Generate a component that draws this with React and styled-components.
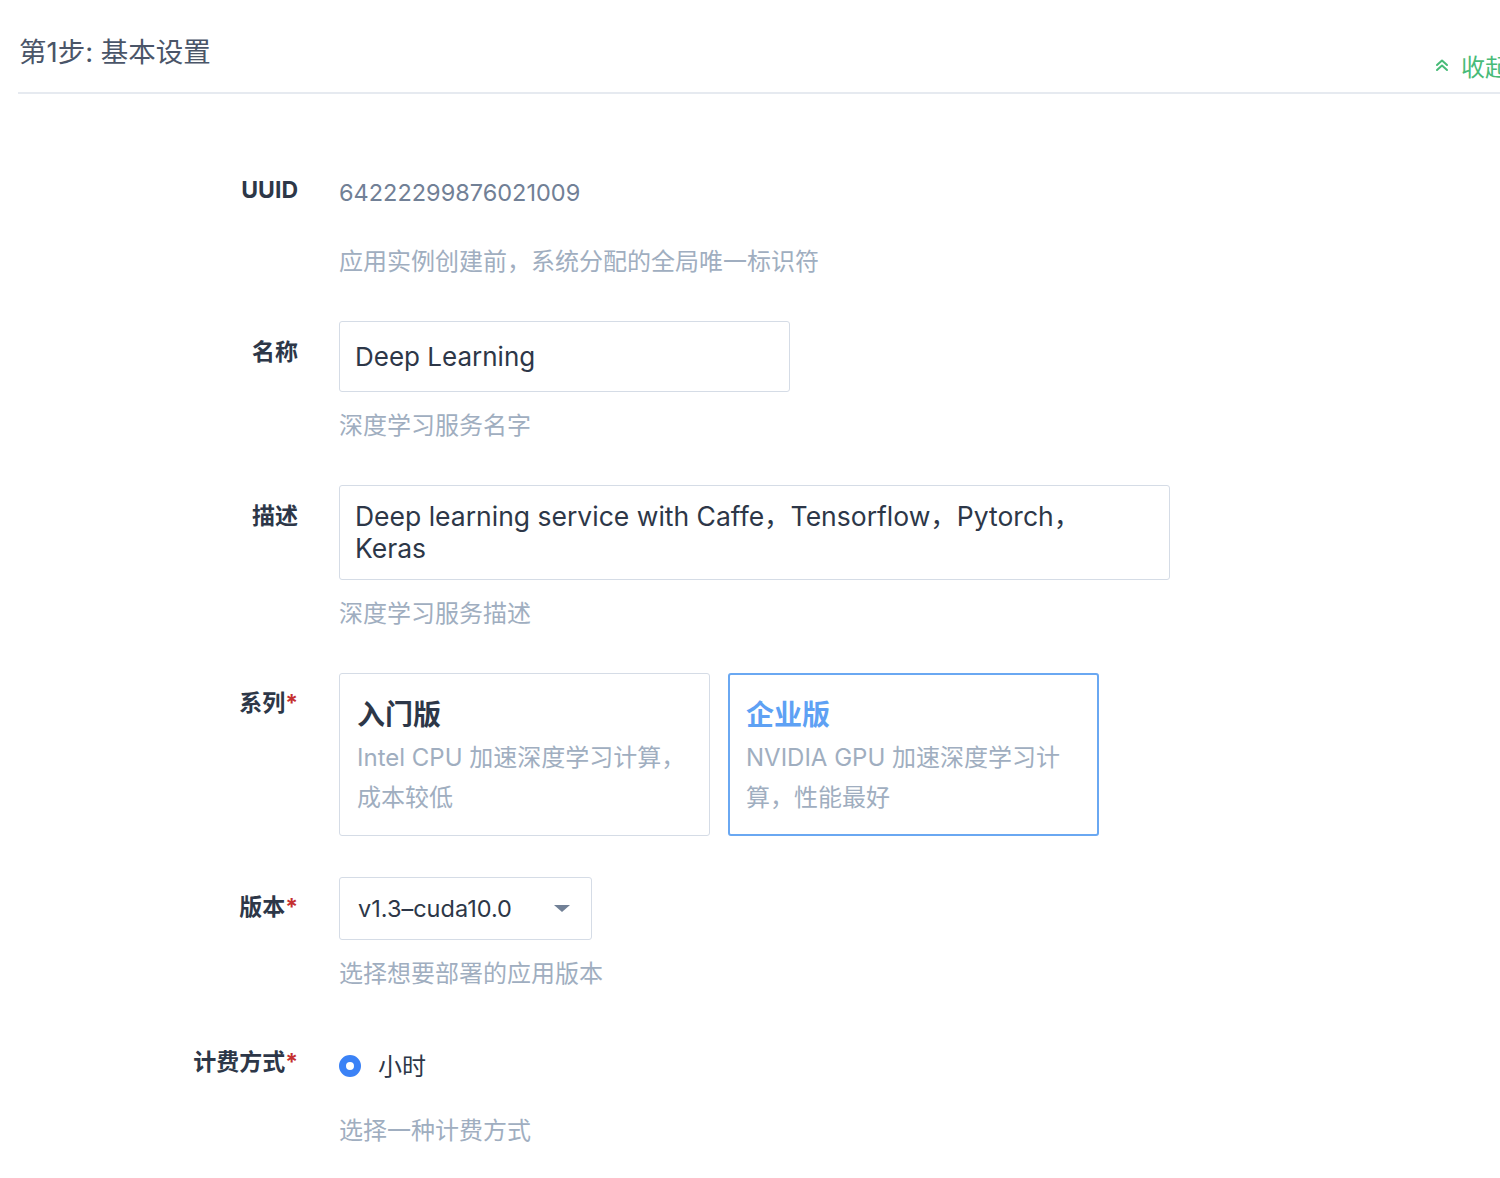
import React from 'react';
import styled, { createGlobalStyle } from 'styled-components';

const GlobalStyle = createGlobalStyle`
  html, body {
    margin: 0;
    padding: 0;
    background: #ffffff;
    overflow: hidden;
  }
  body {
    font-family: Inter, "Noto Sans CJK SC", sans-serif;
    color: #2d3748;
  }
`;

const Page = styled.div`
  width: 1500px;
  margin-left: 18px;
`;

const Header = styled.div`
  display: flex;
  justify-content: space-between;
  height: 92px;
  border-bottom: 2px solid #e6eaf0;
`;

const Title = styled.h2`
  margin: 0;
  padding-top: 34px;
  padding-left: 1px;
  font-size: 27.5px;
  font-weight: 400;
  line-height: 36px;
  color: #4a5568;
`;

const Collapse = styled.div`
  display: flex;
  align-items: center;
  gap: 12px;
  padding-top: 51px;
  margin-right: 9px;
  height: 28px;
  font-size: 24px;
  color: #48bb78;
  white-space: nowrap;
`;

const Form = styled.div`
  padding-top: 79px;
`;

const Row = styled.div`
  display: grid;
  grid-template-columns: 280px 1fr;
  column-gap: 41px;
  margin-bottom: ${p => p.gap || 45}px;
`;

const Label = styled.div`
  padding-top: ${p => p.offset}px;
  text-align: right;
  font-size: 23px;
  font-weight: 700;
  line-height: 28px;
  color: #2d3748;
`;

const Star = styled.span`
  color: #c53030;
`;

const Field = styled.div`
  display: flex;
  flex-direction: column;
  align-items: flex-start;
`;

const Value = styled.div`
  font-size: 23.5px;
  line-height: 40px;
  color: #718096;
`;

const Help = styled.div`
  margin-top: ${p => p.top || 20}px;
  font-size: 24px;
  line-height: 28px;
  color: #a0aec0;
`;

const Input = styled.input`
  box-sizing: border-box;
  width: 451px;
  height: 71px;
  padding: 0 15px;
  border: 1px solid #d5dce6;
  border-radius: 3px;
  font-family: Inter, "Noto Sans CJK SC", sans-serif;
  font-size: 26px;
  color: #2d3748;
  outline: none;
`;

const TextBox = styled.div`
  box-sizing: border-box;
  width: 831px;
  height: 95px;
  padding: 14px 55px 14px 15px;
  border: 1px solid #d5dce6;
  border-radius: 3px;
  font-size: 26.5px;
  line-height: 32px;
  color: #2d3748;
`;

const Cards = styled.div`
  display: flex;
  gap: 18px;
`;

const Card = styled.div`
  box-sizing: border-box;
  width: 371px;
  height: 163px;
  padding: 21px 15px 0 17px;
  border: 1px solid ${p => (p.active ? '#6aa8f2' : '#d5dce6')};
  border-width: ${p => (p.active ? 2 : 1)}px;
  padding-left: ${p => (p.active ? 16 : 17)}px;
  padding-top: ${p => (p.active ? 20 : 21)}px;
  border-radius: 3px;
  background: #fff;
`;

const CardTitle = styled.div`
  font-size: 28px;
  font-weight: 700;
  line-height: 40px;
  color: ${p => (p.active ? '#5ea1f4' : '#2d3748')};
`;

const CardText = styled.div`
  margin-top: 3px;
  font-size: 24px;
  line-height: 40px;
  color: #a0aec0;
`;

const Select = styled.div`
  box-sizing: border-box;
  display: flex;
  align-items: center;
  justify-content: space-between;
  width: 253px;
  height: 63px;
  padding: 0 21px 0 18px;
  border: 1px solid #d5dce6;
  border-radius: 3px;
  font-size: 23.5px;
  color: #2d3748;
`;

const Caret = styled.span`
  width: 0;
  height: 0;
  border-left: 8px solid transparent;
  border-right: 8px solid transparent;
  border-top: 7px solid #718096;
`;

const Option = styled.label`
  display: flex;
  align-items: center;
  gap: 17px;
  height: 40px;
  font-size: 24px;
  color: #2d3748;
`;

const Radio = styled.span`
  box-sizing: border-box;
  width: 22px;
  height: 22px;
  margin-top: 4px;
  border-radius: 50%;
  border: 7px solid #3b82f6;
  background: #fff;
`;

const ChevronsUp = () => (
  <svg width="14" height="14" viewBox="0 0 14 14" fill="none" stroke="#48bb78" strokeWidth="2" strokeLinecap="round" strokeLinejoin="round">
    <polyline points="2,7 7,2.5 12,7" />
    <polyline points="2,12 7,7.5 12,12" />
  </svg>
);

export default function App() {
  return (
    <Page>
      <GlobalStyle />
      <Header>
        <Title>第1步: 基本设置</Title>
        <Collapse>
          <ChevronsUp />
          收起
        </Collapse>
      </Header>

      <Form>
        <Row gap={45}>
          <Label offset={3}>UUID</Label>
          <Field>
            <Value>64222299876021009</Value>
            <Help top={35}>应用实例创建前，系统分配的全局唯一标识符</Help>
          </Field>
        </Row>

        <Row gap={45}>
          <Label offset={17}>名称</Label>
          <Field>
            <Input defaultValue="Deep Learning" />
            <Help>深度学习服务名字</Help>
          </Field>
        </Row>

        <Row gap={45}>
          <Label offset={17}>描述</Label>
          <Field>
            <TextBox>Deep learning service with Caffe，Tensorflow，Pytorch，Keras</TextBox>
            <Help>深度学习服务描述</Help>
          </Field>
        </Row>

        <Row gap={41}>
          <Label offset={16}>系列<Star>*</Star></Label>
          <Cards>
            <Card>
              <CardTitle>入门版</CardTitle>
              <CardText>Intel CPU 加速深度学习计算，成本较低</CardText>
            </Card>
            <Card active>
              <CardTitle active>企业版</CardTitle>
              <CardText>NVIDIA GPU 加速深度学习计算，性能最好</CardText>
            </Card>
          </Cards>
        </Row>

        <Row gap={56}>
          <Label offset={16}>版本<Star>*</Star></Label>
          <Field>
            <Select>
              v1.3–cuda10.0
              <Caret />
            </Select>
            <Help>选择想要部署的应用版本</Help>
          </Field>
        </Row>

        <Row>
          <Label offset={4}>计费方式<Star>*</Star></Label>
          <Field>
            <Option>
              <Radio />
              小时
            </Option>
            <Help top={33}>选择一种计费方式</Help>
          </Field>
        </Row>
      </Form>
    </Page>
  );
}
